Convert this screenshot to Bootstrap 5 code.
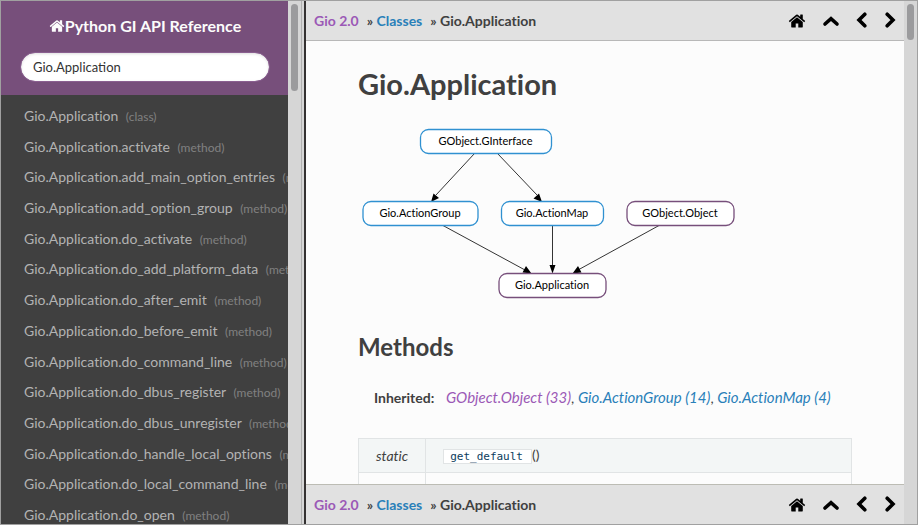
<!DOCTYPE html>
<html lang="en">
<head>
<meta charset="utf-8">
<meta name="viewport" content="width=device-width, initial-scale=1">
<title>Gio.Application - Python GI API Reference</title>
<link href="https://cdn.jsdelivr.net/npm/bootstrap@5.3.0/dist/css/bootstrap.min.css" rel="stylesheet">
<style>
body { font-family: Lato, sans-serif; font-size: 14px; color: #404040; background: #fcfcfc; font-variant-ligatures: none; }
a { text-decoration: none; color: #2980b9; }
.app-frame { height: 100vh; border: 1px solid #a0a0a0; }
.side-pane { flex: 0 0 303px; min-width: 0; background: #404040; }
.pane-content { min-width: 0; }
.side-head { background: #774f7b; padding: 13px 18px 13px 19px; }
.side-title { font-size: 16px; line-height: 24px; color: #fcfcfc; margin-bottom: 12px; }
.side-search { height: 30px; font-size: 13px; line-height: 18px; padding: 4px 12px; color: #333; border: 1px solid #8a5f90; box-shadow: inset 0 1px 3px #ddd; }
.result-list { padding: 12px 0 0 23px; margin-bottom: -1px; }
.result-list li { line-height: 18px; white-space: nowrap; }
.result-list a { font-size: 14px; color: #b3b3b3; }
.result-list small { font-size: 12px; color: #808080; margin-left: 4px; }
.scroll-track { flex: 0 0 13px; background: #d6d6d6; padding: 3px; }
.scroll-thumb { width: 7px; border-radius: 4px; background: #9b9b9d; }
.side-thumb { height: 87px; }
.main-thumb { height: 36px; }
.pane-grip { flex: 0 0 3px; background: #d6d6d6; border-left: 1px solid #b0b0b0; }
.doc-pane { border-left: 2px solid #343131; min-width: 0; }
.crumb-bar { height: 40px; flex: none; padding: 0 8px; background: #e1e1e1; font-weight: 700; }
.crumb-top { border-bottom: 1px solid #b8b8b8; }
.crumb-bottom { border-top: 1px solid #bcbcb4; }
.nav-icons { gap: 16px; }
.nav-icons a { color: #000; }
.visited { color: #9b59b6; }
.doc-body { padding: 23px 52px 0 52px; }
.doc-body h1 { font-size: 29px; line-height: 40px; font-weight: 700; margin-bottom: 21px; }
.doc-body h2 { font-size: 24px; line-height: 32px; font-weight: 700; margin: 28px 0 22px; }
.inherited { padding-left: 16px; line-height: 24px; margin-bottom: 28px; }
.inherited a { font-size: 15px; }
.graph text { font-family: Lato, sans-serif; font-size: 11px; text-anchor: middle; fill: #000; }
.graph rect { fill: #fff; stroke-width: 1.3; }
.iface rect { stroke: #3091d1; }
.klass rect { stroke: #774f7b; }
.methods td { border: 1px solid #e1e4e5; padding: 4px 17px; height: 34px; line-height: 22px; }
.methods tr:first-child td { background: #f3f6f6; }
.methods code { font-family: "DejaVu Sans Mono", monospace; font-size: 11px; color: #0b3c5d; background: #fff; border: 1px solid #e1e4e5; padding: 0 8px 0 6px; }
</style>
<script src="https://cdn.jsdelivr.net/npm/bootstrap@5.3.0/dist/js/bootstrap.bundle.min.js"></script>
</head>
<body>
<svg class="d-none" aria-hidden="true">
  <symbol id="home" viewBox="0 0 1792 1792"><path fill="currentColor" d="M1472 992v480q0 26-19 45t-45 19h-384v-384h-256v384h-384q-26 0-45-19t-19-45v-480q0-1 .5-3t.5-3l575-474 575 474q1 2 1 6zm223-69l-62 74q-8 9-21 11h-3q-13 0-21-7l-692-577-692 577q-12 8-24 7-13-2-21-11l-62-74q-8-10-7-23.5t11-21.5l719-599q32-26 76-26t76 26l244 204v-195q0-14 9-23t23-9h192q14 0 23 9t9 23v408l219 182q10 8 11 21.5t-7 23.5z"/></symbol>
  <symbol id="up" viewBox="0 0 18 18"><path fill="none" stroke="currentColor" stroke-width="3.6" stroke-linecap="round" d="M3 12 9 6.600 15 12"/></symbol>
  <symbol id="left" viewBox="0 0 12 18"><path fill="none" stroke="currentColor" stroke-width="3.6" stroke-linecap="round" d="M8.800 2.200 3 8 8.800 13.800"/></symbol>
  <symbol id="right" viewBox="0 0 12 18"><path fill="none" stroke="currentColor" stroke-width="3.6" stroke-linecap="round" d="M3.200 2.200 9 8 3.200 13.800"/></symbol>
</svg>
<div class="app-frame d-flex overflow-hidden">
  <aside class="side-pane d-flex">
    <div class="pane-content d-flex flex-column flex-fill overflow-hidden">
      <div class="side-head">
        <div class="side-title text-center fw-bold"><a class="text-reset d-inline-flex align-items-center" href="#"><svg width="16" height="16"><use href="#home"/></svg>Python GI API Reference</a></div>
        <input class="side-search form-control rounded-pill" type="text" aria-label="Search" value="Gio.Application">
      </div>
      <ul class="result-list list-unstyled flex-fill d-flex flex-column justify-content-between">
        <li><a href="#">Gio.Application <small>(class)</small></a></li>
        <li><a href="#">Gio.Application.activate <small>(method)</small></a></li>
        <li><a href="#">Gio.Application.add_main_option_entries <small>(method)</small></a></li>
        <li><a href="#">Gio.Application.add_option_group <small>(method)</small></a></li>
        <li><a href="#">Gio.Application.do_activate <small>(method)</small></a></li>
        <li><a href="#">Gio.Application.do_add_platform_data <small>(method)</small></a></li>
        <li><a href="#">Gio.Application.do_after_emit <small>(method)</small></a></li>
        <li><a href="#">Gio.Application.do_before_emit <small>(method)</small></a></li>
        <li><a href="#">Gio.Application.do_command_line <small>(method)</small></a></li>
        <li><a href="#">Gio.Application.do_dbus_register <small>(method)</small></a></li>
        <li><a href="#">Gio.Application.do_dbus_unregister <small>(method)</small></a></li>
        <li><a href="#">Gio.Application.do_handle_local_options <small>(method)</small></a></li>
        <li><a href="#">Gio.Application.do_local_command_line <small>(method)</small></a></li>
        <li><a href="#">Gio.Application.do_open <small>(method)</small></a></li>
      </ul>
    </div>
    <div class="scroll-track"><div class="scroll-thumb side-thumb"></div></div>
    <div class="pane-grip"></div>
  </aside>
  <div class="doc-pane d-flex flex-fill overflow-hidden">
    <div class="pane-content d-flex flex-column flex-fill overflow-hidden">
      <nav class="crumb-bar crumb-top d-flex align-items-center justify-content-between" aria-label="Top breadcrumb">
        <div class="d-flex gap-2"><a class="visited" href="#">Gio 2.0</a><span>» <a href="#">Classes</a></span><span>» Gio.Application</span></div>
        <div class="nav-icons d-flex"><a class="d-flex" href="#" aria-label="Home"><svg width="18" height="18"><use href="#home"/></svg></a><a class="d-flex" href="#" aria-label="Up"><svg width="18" height="18"><use href="#up"/></svg></a><a class="d-flex" href="#" aria-label="Previous"><svg width="12" height="18"><use href="#left"/></svg></a><a class="d-flex" href="#" aria-label="Next"><svg width="12" height="18"><use href="#right"/></svg></a></div>
      </nav>
      <main class="doc-body flex-fill overflow-hidden">
        <h1>Gio.Application</h1>
        <svg class="graph d-block" width="380" height="178" viewBox="358 125 380 178" role="img" aria-label="Class hierarchy">
          <g stroke="#000" stroke-width="0.8"><path d="M474.500 153.500 436 195M497.500 153.500 537 195M443 225.500 525 270M552.500 225.500V267M659 225.500 578 270"/></g>
          <path d="M431 202 433.500 193.500 439 198zM542 202 533.500 198.500 539 193.500zM531.500 273.500 522.500 272.500 526 266zM552.500 273.500 549.500 265H555.500zM572.500 273.500 578 266 581.500 272.500z"/>
          <g class="iface"><rect x="420.500" y="129.500" width="131" height="24" rx="8"/><rect x="363" y="201.500" width="115" height="24" rx="8"/><rect x="501.500" y="201.500" width="102" height="24" rx="8"/></g>
          <g class="klass"><rect x="627" y="201.500" width="107" height="24" rx="8"/><rect x="499" y="273.500" width="107" height="24" rx="8"/></g>
          <text x="485.500" y="145">GObject.GInterface</text><text x="420" y="217">Gio.ActionGroup</text><text x="552" y="217">Gio.ActionMap</text><text x="680" y="217">GObject.Object</text><text x="552" y="289">Gio.Application</text>
        </svg>
        <h2>Methods</h2>
        <p class="inherited"><strong class="me-2">Inherited:</strong> <em><a class="visited" href="#">GObject.Object (33)</a></em>, <em><a href="#">Gio.ActionGroup (14)</a></em>, <em><a href="#">Gio.ActionMap (4)</a></em></p>
        <table class="methods w-100">
          <tbody>
            <tr><td><em>static</em></td><td class="w-100"><code>get_default</code>()</td></tr>
            <tr><td></td><td></td></tr>
          </tbody>
        </table>
      </main>
      <nav class="crumb-bar crumb-bottom d-flex align-items-center justify-content-between" aria-label="Bottom breadcrumb">
        <div class="d-flex gap-2"><a class="visited" href="#">Gio 2.0</a><span>» <a href="#">Classes</a></span><span>» Gio.Application</span></div>
        <div class="nav-icons d-flex"><a class="d-flex" href="#" aria-label="Home"><svg width="18" height="18"><use href="#home"/></svg></a><a class="d-flex" href="#" aria-label="Up"><svg width="18" height="18"><use href="#up"/></svg></a><a class="d-flex" href="#" aria-label="Previous"><svg width="12" height="18"><use href="#left"/></svg></a><a class="d-flex" href="#" aria-label="Next"><svg width="12" height="18"><use href="#right"/></svg></a></div>
      </nav>
    </div>
    <div class="scroll-track"><div class="scroll-thumb main-thumb"></div></div>
  </div>
</div>
</body>
</html>
